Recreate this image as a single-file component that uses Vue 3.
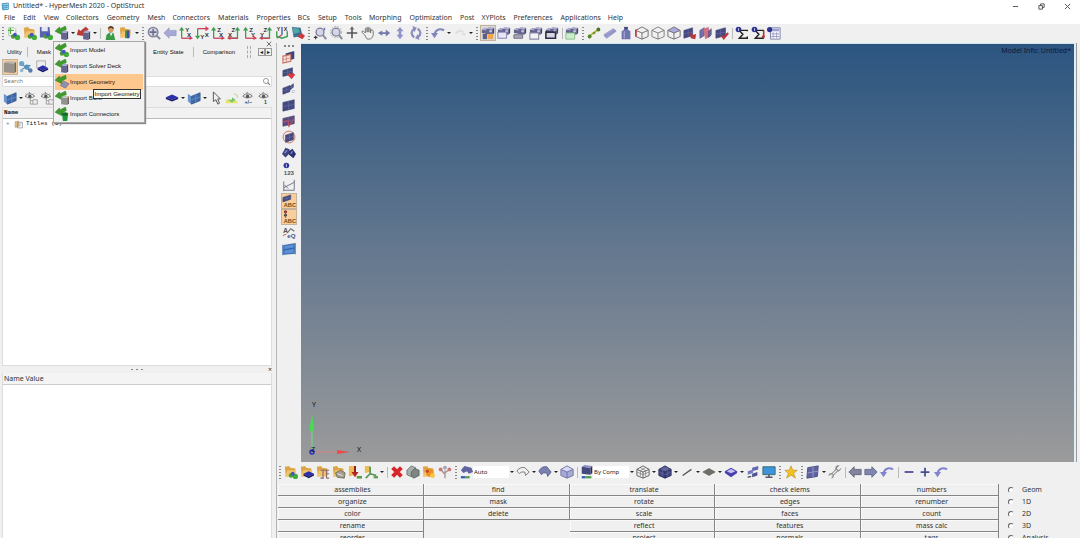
<script setup>
import { ref } from 'vue'

const menus = ['File', 'Edit', 'View', 'Collectors', 'Geometry', 'Mesh', 'Connectors', 'Materials', 'Properties', 'BCs', 'Setup', 'Tools', 'Morphing', 'Optimization', 'Post', 'XYPlots', 'Preferences', 'Applications', 'Help']

/* ---- icon building blocks, all on a 16 x 16 grid ---- */
const poly = (pts, fill, extra = '') => `<polygon points="${pts}" fill="${fill}" ${extra}/>`
const line = (d, color, w = 1) => `<path d="${d}" fill="none" stroke="${color}" stroke-width="${w}"/>`
const box = (x, y, w, h, front, top, side) =>
  poly(`${x},${y + 2} ${x + w - 2},${y + 3} ${x + w - 2},${y + h} ${x},${y + h - 1}`, front) +
  poly(`${x},${y + 2} ${x + 3},${y} ${x + w},${y + 1} ${x + w - 2},${y + 3}`, top) +
  poly(`${x + w - 2},${y + 3} ${x + w},${y + 1} ${x + w},${y + h - 2} ${x + w - 2},${y + h}`, side)
const brick = (x, y, w = 8, h = 7) => box(x, y, w, h, '#64648f', '#a9a9cf', '#41416e')
const plate = (x, y, w, h, c = '#454981') =>
  poly(`${x},${y + 3} ${x + w},${y} ${x + w},${y + h - 3} ${x},${y + h}`, c, 'stroke="#35396c" stroke-width=".6"') +
  line(`M${x + w / 2} ${y + 2}V${y + h - 2}M${x} ${y + h / 2 + 1}L${x + w} ${y + h / 2 - 1}`, '#7075ab', 0.6)
const diamond = (x, y, w = 9, c = '#2b2fae') =>
  poly(`${x},${y + 3} ${x + w / 2},${y} ${x + w},${y + 3} ${x + w / 2},${y + 6}`, c) +
  poly(`${x},${y + 3} ${x + w / 2},${y + 6} ${x + w},${y + 3} ${x + w},${y + 5} ${x + w / 2},${y + 8} ${x},${y + 5}`, '#15186c')
const balls = (x, y) =>
  `<circle cx="${x}" cy="${y}" r="2.6" fill="#4a9a35"/><circle cx="${x + 5}" cy="${y + 1}" r="3" fill="#3fae36"/><circle cx="${x + 2}" cy="${y - 2}" r="2.2" fill="#4753c4"/>`
const folder = poly('1,2 6,1 7,3 13,4 13,12 2,13', '#dda545') + poly('1,13 4,6 14,6 11,13', '#f1c36c')
const greenArrow = poly('0,6 5,1 6,3 12,0 13,4 8,7 8,10', '#3f9a2e', 'stroke="#277a1a" stroke-width=".5"')
const redArrow = poly('0,10 2,4 4,6 10,1 13,4 7,8 8,11', '#c03a33', 'stroke="#8f1e1a" stroke-width=".5"')
const label = (x, y, t, size = 6, c = '#333') => `<text x="${x}" y="${y}" font-size="${size}" font-family="Liberation Sans, sans-serif" font-weight="bold" fill="${c}">${t}</text>`
const axes = (up, side, flip) => flip
  ? line('M12 2V14H2', '#3d9e4c', 1.5) + line('M12 14H2', '#d0405c', 1.5) + poly('9,5 12,1 15,5', '#3d9e4c') + poly('4,11 0,14 4,16', '#d0405c') + label(5, 7, up, 7) + label(1, 12, side, 7)
  : line('M3 2V14', '#3d9e4c', 1.5) + line('M3 14H13', '#d0405c', 1.5) + poly('0,5 3,1 6,5', '#3d9e4c') + poly('12,11 16,14 12,16', '#d0405c') + label(7, 7, up, 7) + label(9, 12, side, 7)
const lens = (x, y, r) => `<circle cx="${x}" cy="${y}" r="${r}" fill="#d4d7ea" stroke="#7c7f96" stroke-width="1.5"/>` + line(`M${x + r * 0.7} ${y + r * 0.7}L15 15`, '#8a8ca0', 2.4)
const wire = (c, top = 'none') =>
  poly('1,5 8,1 15,5 8,8', top) + line('M1 5L8 1L15 5V12L8 15L1 12ZM1 5L8 8L15 5M8 8V15', c, 1)
const undo = (c) => line('M4 9C6 3 11 3 15 5', c, 2.4) + poly('0,8 8,8 4,14', c)
const disp = (lower) => brick(1, 2, 8, 7) + brick(6, 1, 9, 9) + '<circle cx="11" cy="6" r="1.500" fill="#c5c5e0"/>' + lower
const eye = (x, y) => line(`M${x} ${y}q5.500 -6 11 0q-5.500 4 -11 0ZM${x + 1} ${y - 3}l1 1M${x + 5} ${y - 5}v1.500M${x + 10} ${y - 3}l-1 1`, '#6b6b6b', 1) + `<circle cx="${x + 5.5}" cy="${y}" r="1.900" fill="#555"/>`
const sigma = line('M14 6V5H5L9 9.500L5 14H14V12', '#222', 1.7) + '<circle cx="4" cy="4" r="3.200" fill="#2d348f"/>' + line('M4 2.500V5.500', '#fff', 0.8)

const icons = {
  app: poly('1,2 14,1 14,14 2,14', '#d6ecf7') + line('M2 3L13 2V13L3 14ZM2 7L13 6M5 3V14M9 2V13M3 11L13 9', '#2587b8', 1.3),
  newModel: poly('2,2 8,2 10,4 10,11 2,11', '#fff', 'stroke="#8bb384" stroke-width=".8"') + line('M4 2V9M1 5H8', '#55b044', 1.5) + balls(7, 12),
  open: folder + balls(8, 12),
  save: poly('1,1 12,1 13,13 1,13', '#5a63ac') + poly('3,1 10,1 10,6 3,6', '#e4e7f5') + balls(8, 12),
  import: greenArrow + brick(7, 5, 8, 11),
  export: redArrow + brick(7, 5, 8, 11),
  user: '<circle cx="9" cy="4" r="3.200" fill="#d89a63"/>' + line('M6 3Q9 -1 12 3', '#54371f', 1.8) + poly('3,16 4,10 8,7 12,8 14,16', '#3c9a45') + poly('8,8 11,8 9,12', '#eef'),
  folderPlay: folder + poly('7,5 9,5 9,14 7,14', '#2f8a4b') + poly('9,5 12,5 12,14 9,14', '#344fae'),
  fit: lens(7, 7, 5.5) + line('M7 3V11M3 7H11', '#6d7088', 1.8),
  prev: poly('1,8 7,2 7,5 15,5 15,11 7,11 7,14', '#a6a9d6', 'stroke="#9093c0" stroke-width=".7"'),
  xyTop: axes('Y', 'X'),
  xyBottom: line('M3 14V3', '#3d9e4c', 1.5) + line('M3 3H13', '#d0405c', 1.5) + poly('0,11 3,15 6,11', '#3d9e4c') + poly('12,0 16,3 12,6', '#d0405c') + label(6, 15, 'Y', 7) + label(11, 12, 'X', 7),
  xzLeft: axes('Z', 'X'),
  xzRight: axes('Z', 'X', true),
  yzLeft: axes('Z', 'Y'),
  yzRight: axes('Z', 'Y', true),
  iso: line('M8 1V10', '#3a51b5', 1.5) + line('M8 10L2 14', '#d0405c', 1.5) + line('M2 6V12L8 14L14 12V6', '#3d9e4c', 1.6) + label(2, 6, 'Y', 6) + label(10, 6, 'X', 6),
  saved: poly('1,1 11,2 13,11 3,13', '#3d7093') + poly('2,2 9,3 10,7 3,9', '#50a7a3') + poly('7,12 12,8 16,11 13,15', '#c73d3d'),
  zoomWin: lens(8, 7, 4.5) + line('M1 13H5M3 11V15', '#333', 1.2) + line('M13 2V5', '#7579b5', 1.8),
  zoomCircle: lens(8, 7, 4.5) + '<circle cx="8" cy="7" r="6.500" fill="none" stroke="#999" stroke-width=".8" stroke-dasharray="2 1.500"/>',
  pan: line('M8 2V14M2 8H14', '#555', 1.8) + line('M6 4L8 1L10 4', '#555', 1),
  hand: line('M4 10L1 7Q1 5 3 6L5 8V3Q6 1 7 3V7V2Q8 0 9 2V7V3Q10 1 11 3V8V5Q13 3 14 6V10Q13 15 9 15H7Z', '#777', 1.1),
  leftRight: poly('1,8 6,5 6,7 10,7 10,4 15,8 10,12 10,9 6,9 6,11', '#7478aa'),
  upDown: poly('8,1 12,6 9.500,6 9.500,10 12,10 8,15 4,10 6.500,10 6.500,6 4,6', '#9093c9'),
  rotate: line('M6 3Q0 8 6 13M10 3Q16 8 10 13', '#8a8dbd', 2.6) + poly('4,0 9,2 6,7', '#8a8dbd') + poly('12,16 7,14 10,9', '#8a8dbd'),
  undo: undo('#8186bd'),
  undoBlue: undo('#8084d0'),
  redo: line('M3 9Q7 3 12 7', '#dcdce4', 2) + poly('9,8 15,8 13,12', '#dfdfe7'),
  disp1: disp(poly('2,9 7,9 7,15 2,15', '#5d5d88') + poly('8,9 14,9 14,15 8,15', '#f2a64a')),
  disp2: disp(poly('1,7 11,7 11,14 1,14', '#e6e6f6', 'stroke="#7777a5" stroke-width="1"')),
  disp3: disp(poly('1,10 11,10 11,14 1,14', '#a7a7b8', 'stroke="#66667d" stroke-width="1"')),
  disp4: disp(poly('1,8 11,8 11,15 1,15', '#f4f4f4', 'stroke="#8a8aa8" stroke-width="1.200"')),
  disp5: disp(poly('1,7 12,7 12,14 1,14', '#d5d5e2', 'stroke="#2d2d49" stroke-width="1.800"')),
  disp6: disp(poly('1,8 11,8 11,15 1,15', '#cdebcd', 'stroke="#8cba8c" stroke-width="1"')),
  lineGreen: line('M2 12L13 4', '#b3b83a', 2) + '<circle cx="3" cy="12" r="2.200" fill="#4e8628"/><circle cx="8" cy="8" r="1.500" fill="#6e962f"/><circle cx="13" cy="4" r="2.200" fill="#44762b"/>',
  beam: poly('1,10 12,3 15,6 4,14', '#a1a1d5', 'stroke="#8787bd" stroke-width=".8"') + line('M2 12L14 5', '#8383bb', 1),
  bottle: poly('6,1 10,1 10,4 13,6 13,15 3,15 3,6 6,4', '#7074ae') + poly('6,1 10,1 10,4 6,4', '#484b84') + line('M6 6V14', '#a2a5d3', 1.5),
  cubeRed: wire('#666') + line('M1 4V12', '#c33', 1.8),
  cube: wire('#777'),
  cubeTop: wire('#666', '#a9abdf'),
  plateRed: plate(1, 2, 10, 12) + poly('8,8 12,10 15,9 14,15 9,14', '#b9343d'),
  plateMid: plate(1, 2, 5, 12, '#7b6fae') + poly('5,3 11,1 13,12 7,15', '#cf7384') + plate(11, 3, 3, 10, '#6d5c94'),
  plateCheck: plate(1, 2, 11, 12) + line('M8 11L10 14L15 8', '#b9343d', 2.4),
  sigma,
  sigmaDown: sigma + line('M14.500 5V13', '#b93030', 1.8) + poly('12,11 16,11 14.500,15', '#b93030'),
  calc: poly('4,2 15,2 15,15 4,15', '#f5f5fb', 'stroke="#7b7ea4" stroke-width="1"') + poly('5,3 14,3 14,6 5,6', '#9da1d0') + line('M7 7V14M11 7V14M5 9H14M5 12H14', '#9a9dc4', 1) + '<circle cx="3" cy="4" r="3" fill="#2d348f"/>',
  /* vertical toolbar */
  sketch: poly('4,4 14,1 14,10 5,13', '#3e4378') + poly('1,7 10,5 10,13 1,15', '#f3dedb', 'stroke="#c7705f" stroke-width="1.200"') + line('M1 11L10 9M5 6V14', '#c98273', 0.8),
  mask: plate(1, 2, 11, 10, '#3e4d78') + poly('6,10 9,8 11,9 13,8 15,10 11,15', '#d83a45'),
  shells: plate(1, 4, 8, 10) + plate(9, 2, 4, 7) + line('M11 10H15M11 12H14', '#b8bfd8', 1),
  shell: plate(1, 2, 13, 13),
  shellRed: plate(1, 2, 13, 12, '#60497c') + line('M1 9L7 8L8 14L14 5', '#b2505f', 1.3),
  shellRound: '<circle cx="8" cy="8" r="6.800" fill="#f5e3df" stroke="#b87468" stroke-width="1"/>' + plate(4, 3, 9, 11),
  binocular: poly('0,9 4,2 9,4 8,9 4,13', '#3c4380') + poly('8,6 12,3 16,9 13,14 8,10', '#2c3270') + line('M3 8L6 5M10 9L12 6', '#8b93c9', 1.4),
  numbers: '<circle cx="5" cy="4" r="3.200" fill="#2b319b"/>' + line('M5 2V6', '#dde', 1) + label(2, 15, '123', 7, '#555'),
  measure: line('M2 4V15M14 2V14M2 11L14 5M2 14H14M3 8L7 12', '#666a7d', 1),
  abcPlate: plate(1, 1, 9, 8) + label(2, 15, 'ABC', 6.5, '#6d4a16'),
  abcDots: '<circle cx="4" cy="2" r="1.800" fill="#833"/><circle cx="4" cy="6" r="1.600" fill="#333"/>' + line('M4 2V9', '#c33', 1) + label(2, 15, 'ABC', 6.5, '#6d4a16'),
  abcFree: label(1, 8, 'A', 8, '#555') + line('M6 8L10 3L14 6', '#666', 1.2) + label(6, 14, 'eQ', 7, '#4e527d') + line('M1 11L5 9', '#b44', 1),
  image: poly('2,4 14,2 14,13 2,14', '#5a8fd6', 'stroke="#2d5ea0" stroke-width="1"') + line('M1 3V15M15 1V14M2 9L14 7', '#2f63ab', 1.2),
  /* model browser */
  block: box(1, 1, 14, 14, '#97938c', '#b9b6b0', '#6b6862'),
  nodes: line('M3 5L8 8L13 6M8 8L12 12M8 8L3 11', '#4b7fa8', 1.3) + '<circle cx="3" cy="4" r="3" fill="#69a7cd"/><circle cx="9" cy="8" r="3" fill="#5894be"/><circle cx="13" cy="12" r="2.500" fill="#5a7bad"/><circle cx="3" cy="12" r="2" fill="#94b6cb"/>',
  component: poly('2,1 12,1 12,9 2,9', '#eee', 'stroke="#a4a4a4" stroke-width="1"') + diamond(3, 6, 12),
  plateBlue: poly('1,3 5,6 5,15 1,12', '#6c94cd') + poly('5,6 15,2 15,11 5,15', '#4169a9', 'stroke="#2e5288" stroke-width=".8"') + line('M10 4V13M5 10L15 7', '#6b93c8', 0.8),
  eyeTree: eye(0, 6) + line('M6 8V15H9M6 11H9', '#999', 1) + line('M9 10H14V15H9Z', '#999', 1),
  plainDiamond: diamond(1, 4, 14),
  pointer: line('M5 1V12L8 10L10 15L12 14L10 9H13Z', '#555', 1.1),
  highlight: poly('1,10 12,10 15,14 1,14', '#e6e468') + poly('3,10 8,10 8,7 12,10 8,13', '#79c471') + line('M10 3L14 5V8', '#c3c97e', 1),
  eyePm: eye(2, 6) + label(4, 15, '+/−', 6, '#444'),
  eyeOne: eye(2, 6) + label(8, 15, '1', 6, '#444'),
  search: '<circle cx="7" cy="7" r="4.500" fill="none" stroke="#777" stroke-width="1.300"/>' + line('M10 10L14 14', '#777', 1.8),
  titles: poly('1,3 7,2 7,12 1,13', '#eac78d', 'stroke="#a07b4c" stroke-width=".8"') + line('M5 4H14V14H5Z', '#777', 1.1) + line('M7 7H12M7 10H11', '#777', 1),
  /* import menu */
  impModel: greenArrow + balls(8, 12),
  impDeck: greenArrow + brick(7, 5, 8, 11),
  impGeom: greenArrow + poly('6,12 10,7 16,10 12,15', '#8d91ae', 'stroke="#656a90" stroke-width=".7"'),
  impBom: greenArrow + box(7, 5, 9, 11, '#92928f', '#c2c2bf', '#686865'),
  impConn: greenArrow + poly('8,8 15,8 14,16 9,16', '#20963a') + '<ellipse cx="11.500" cy="8" rx="3.600" ry="2" fill="#116d27"/>',
  /* bottom toolbar */
  fBalls: folder + balls(8, 12),
  fDiamond: folder + diamond(4, 7, 12),
  fMat: folder + line('M5 6H15M8 6V15M12 6V15M5 15H9M12 10H15M12 15H15', '#8a6b67', 1.3),
  fProp: folder + poly('4,9 10,6 15,9 14,15 6,14', '#a19f91', 'stroke="#6d6a5c" stroke-width="1"') + line('M6 10L12 12', '#eee', 1),
  fLoad: poly('1,1 8,1 8,11 1,13', '#efbb57') + line('M8 1V12', '#8b1919', 2.2) + poly('4,8 12,8 8,14', '#b72323') + line('M10 14H16', '#5a9a4b', 3),
  fSystem: poly('1,1 7,1 7,8 1,9', '#efbb57') + line('M7 2V10L2 15M7 10L14 12', '#4f9250', 1.8) + line('M11 14H16', '#5a9a4b', 2.5),
  delete: line('M3 3L13 13M13 3L3 13', '#d6262b', 4.6),
  stack: poly('1,6 6,1 11,3 11,10 5,13 1,11', '#a6aea9', 'stroke="#59615c" stroke-width=".8"') + poly('6,8 10,4 15,6 15,12 9,15 6,13', '#7e8682', 'stroke="#4f5753" stroke-width=".8"'),
  organize: folder + '<circle cx="9" cy="9" r="4.300" fill="#f08d25"/><circle cx="12" cy="12" r="2.800" fill="#f6c545"/><circle cx="6" cy="7" r="1.800" fill="#c3452a"/>',
  numberTree: line('M8 15V6M8 11L4 6M8 9L12 6', '#a88c8c', 1.4) + '<circle cx="3" cy="5" r="2.200" fill="#c77878"/><circle cx="8" cy="3" r="2.200" fill="#a5a5b5"/><circle cx="13" cy="5" r="2.200" fill="#c77878"/>',
  autoColor: poly('1,6 5,1 13,3 15,8 10,10 8,7 4,9', '#5f649f') + line('M1 14H6', '#2f59b5', 2.5) + line('M6 14H11', '#4b9b49', 2.5),
  surfWire: line('M1 7Q4 2 10 3L15 8L11 12L10 8Q5 7 4 10Z', '#777', 1.1),
  surfSolid: '<path d="M1 7Q4 1 10 2L15 8L11 13L10 9Q5 8 4 11Z" fill="#7c80b0" stroke="#555a8f"/>',
  cubeGlass: poly('1,5 8,1 15,5 15,12 8,15 1,12', '#a8aad6') + wire('#6c6fa0', '#d8d9f5'),
  compColor: box(2, 0, 12, 11, '#444980', '#8d91c2', '#292d5e') + line('M2 14H6', '#2f59b5', 2.500) + line('M6 14H13', '#4b9b49', 2.500),
  meshWire: wire('#555') + line('M5 3L11 6.500V13M11 3L5 6.500V13M1 8L8 11L15 8', '#777', 0.8),
  meshSolid: poly('1,5 8,1 15,5 15,12 8,15 1,12', '#40457f') + wire('#282b5a', '#5c6199') + line('M5 3L11 6.500V13M11 3L5 6.500V13M1 8L8 11L15 8', '#6d72a3', 0.6),
  elem1d: line('M3 12L13 5', '#555', 1.5),
  elem2d: poly('1,8 8,4 15,8 8,12', '#6d7169', 'stroke="#4a4d47" stroke-width=".6"'),
  elem3d: poly('1,7 8,3 15,7 15,9 8,14 1,9', '#4b3fae') + poly('3,7 8,4.500 13,7 8,9.500', '#c5c2f4'),
  layers: poly('7,3 14,1 14,5 7,7', '#6268b0') + poly('2,7 8,5 8,9 2,11', '#767cc0') + poly('7,10 13,8 13,12 7,14', '#4c528e') + line('M2 14L6 13', '#555', 1.6),
  monitor: poly('1,2 15,2 15,11 1,11', '#3d93dc', 'stroke="#366" stroke-width="1"') + line('M8 11V14M4 14H12', '#556', 1.8),
  star: poly('8,1 10,6 15,6 11,9.500 13,15 8,11.500 3,15 5,9.500 1,6 6,6', '#f4c21f', 'stroke="#b98812" stroke-width=".7"'),
  panels: poly('2,3 14,1 13,13 1,15', '#5d62a0', 'stroke="#474b82" stroke-width="1"') + line('M8 2V14M2 9L14 7', '#9ca0cc', 1),
  wrench: line('M4 12L11 5', '#8a8a8a', 3.6) + line('M4 12L11 5', '#f0f0f0', 1.6) + line('M15 4L12 7L9 4L12 1Q8 1 9 6M1 12Q2 9 5 10Q8 13 4 15', '#8a8a8a', 1.2),
  back: poly('1,8 7,2 7,5 15,5 15,11 7,11 7,14', '#82849c', 'stroke="#606378" stroke-width="1"'),
  forward: poly('15,8 9,2 9,5 1,5 1,11 9,11 9,14', '#8285b0', 'stroke="#606388" stroke-width="1"'),
  minus: line('M3 8H13', '#484c92', 2),
  plus: line('M3 8H13M8 3V13', '#484c92', 2)
}

const mainTools = ['|:', 'newModel', 'open', 'save', 'import', 'v', 'export', 'v', '|', 'user', 'folderPlay', 'v', '|:',
  'fit', 'prev', 'xyTop', 'xyBottom', 'xzLeft', 'xzRight', 'yzLeft', 'yzRight', 'iso', 'saved', '|:',
  'zoomWin', 'zoomCircle', 'pan', 'hand', 'leftRight', 'upDown', 'rotate', '|:', 'undo', 'v', 'redo', 'v', '|:',
  'disp1', 'disp2', 'disp3', 'disp4', 'disp5', '|', 'disp6', '|:',
  'lineGreen', 'beam', 'bottle', 'cubeRed', 'cube', 'cubeTop', 'plateRed', 'plateMid', 'plateCheck', '|', 'sigma', 'sigmaDown', 'calc']

const lowerTools = ['|:', 'fBalls', 'fDiamond', 'fMat', 'fProp', 'fLoad', 'fSystem', 'v', '|', 'delete', 'stack', 'organize', 'numberTree', '|:',
  { icon: 'autoColor', value: 'Auto', name: 'Geometry color mode' }, 'v', 'surfWire', 'v', 'surfSolid', 'v', 'cubeGlass', '|',
  { icon: 'compColor', value: 'By Comp', name: 'Element color mode' }, 'v', 'meshWire', 'v', 'meshSolid', 'v', 'elem1d', 'v', 'elem2d', 'v', 'elem3d', 'v', 'layers', 'monitor', '|:',
  'star', '|:', 'panels', 'v', 'wrench', '|', 'back', 'forward', 'undoBlue', '||', 'minus', 'plus', 'undoBlue']

const sideTools = ['sketch', 'mask', 'shells', 'shell', 'shellRed', 'shellRound', 'binocular', 'numbers', 'measure', 'abcPlate', 'abcDots', 'abcFree', 'image']
const pressed = ['disp1', 'abcPlate', 'abcDots', 'block']

const importMenu = [
  ['impModel', 'Import Model'], ['impDeck', 'Import Solver Deck'], ['impGeom', 'Import Geometry'], ['impBom', 'Import BOM'], ['impConn', 'Import Connectors']
]

const panel = [
  ['assemblies', 'organize', 'color', 'rename', 'reorder'],
  ['find', 'mask', 'delete'],
  ['translate', 'rotate', 'scale', 'reflect', 'project'],
  ['check elems', 'edges', 'faces', 'features', 'normals'],
  ['numbers', 'renumber', 'count', 'mass calc', 'tags']
]
const pages = ['Geom', '1D', '2D', '3D', 'Analysis']
const page = ref('')
const query = ref('')
</script>

<template>
  <div class="window">
    <header class="titlebar">
      <svg class="logo" viewBox="0 0 16 16" v-html="icons.app"></svg>
      <span class="title">Untitled* - HyperMesh 2020 - OptiStruct</span>
      <button class="sys" aria-label="Minimize"><svg viewBox="0 0 8 8"><path d="M1 4H7" /></svg></button>
      <button class="sys" aria-label="Restore"><svg viewBox="0 0 8 8"><path d="M1 3H5V7H1ZM3 3V1H7V5H5" /></svg></button>
      <button class="sys" aria-label="Close"><svg viewBox="0 0 8 8"><path d="M1 1L7 7M7 1L1 7" /></svg></button>
    </header>
    <nav class="menubar">
      <button v-for="m in menus" :key="m">{{ m }}</button>
    </nav>
    <div class="toolbar main-tools">
      <template v-for="(t, i) in mainTools" :key="i">
        <span v-if="t === '|:'" class="grip"></span>
        <span v-else-if="t === '|'" class="sep"></span>
        <button v-else-if="t === 'v'" class="caret" aria-label="More"></button>
        <button v-else class="tool" :class="{ pressed: pressed.includes(t) }" :aria-label="t"><svg viewBox="0 0 16 16" v-html="icons[t]"></svg></button>
      </template>
    </div>

    <div class="body">
      <aside class="browser">
        <div class="tabs">
          <button class="tab">Utility</button>
          <button class="tab">Mask</button>
          <span class="tab-gap"></span>
          <button class="tab">Entity State</button>
          <button class="tab">Comparison</button>
          <span class="torn"></span>
          <span class="tab-nav"><button aria-label="Previous tabs">◂</button><button aria-label="Next tabs">▸</button></span>
          <button class="close" aria-label="Close panel"><svg viewBox="0 0 8 8"><path d="M1 1L7 7M7 1L1 7" /></svg></button>
        </div>
        <div class="toolbar views">
          <button v-for="t in ['block', 'nodes', 'component']" :key="t" class="tool" :class="{ pressed: t === 'block' }" :aria-label="t"><svg viewBox="0 0 16 16" v-html="icons[t]"></svg></button>
        </div>
        <label class="search">
          <input v-model="query" type="text" placeholder="Search" aria-label="Search" />
          <svg viewBox="0 0 16 16" v-html="icons.search"></svg>
        </label>
        <div class="toolbar actions">
          <button class="tool" aria-label="Show elements"><svg viewBox="0 0 16 16" v-html="icons.plateBlue"></svg></button>
          <button class="caret" aria-label="More"></button>
          <button class="tool" aria-label="Show all"><svg viewBox="0 0 16 16" v-html="icons.eyeTree"></svg></button>
          <button class="tool" aria-label="Hide all"><svg viewBox="0 0 16 16" v-html="icons.eyeTree"></svg></button>
          <span class="stretch"></span>
          <button class="tool" aria-label="Components"><svg viewBox="0 0 16 16" v-html="icons.plainDiamond"></svg></button>
          <button class="caret" aria-label="More"></button>
          <button class="tool" aria-label="Elements"><svg viewBox="0 0 16 16" v-html="icons.plateBlue"></svg></button>
          <button class="caret" aria-label="More"></button>
          <button v-for="t in ['pointer', 'highlight', 'eyePm', 'eyeOne']" :key="t" class="tool" :aria-label="t"><svg viewBox="0 0 16 16" v-html="icons[t]"></svg></button>
        </div>
        <div class="tree">
          <div class="tree-head">Name</div>
          <div class="tree-row"><span class="expander">+</span><svg viewBox="0 0 16 16" v-html="icons.titles"></svg>Titles (1)</div>
        </div>
        <div class="hsplit"><i></i><i></i><i></i><span>×</span></div>
        <div class="props">
          <div class="props-head">Name Value</div>
        </div>
      </aside>

      <main class="work">
        <div class="stage">
          <div class="side-tools">
            <span class="hgrip"></span>
            <button v-for="t in sideTools" :key="t" class="tool" :class="{ pressed: pressed.includes(t) }" :aria-label="t"><svg viewBox="0 0 16 16" v-html="icons[t]"></svg></button>
          </div>
          <div class="viewport">
            <div class="model-info">Model Info: Untitled*</div>
            <svg class="triad" viewBox="0 0 60 60">
              <path d="M9 50V26" stroke="#6fe07a" stroke-width="1" />
              <polygon points="7,26 9,13 11,26 11,30 7,30" fill="#3fe04c" />
              <path d="M12 51H34" stroke="#d88484" stroke-width="1" />
              <polygon points="34,49 47,51 34,53" fill="#ee4a4c" />
              <circle cx="9" cy="51" r="2" fill="none" stroke="#2532b8" stroke-width="1.500" />
              <text x="9" y="6">Y</text><text x="8" y="51">Z</text><text x="54" y="51">X</text>
            </svg>
          </div>
        </div>
        <div class="toolbar lower-tools">
          <template v-for="(t, i) in lowerTools" :key="i">
            <span v-if="t === '|:'" class="grip"></span>
            <span v-else-if="t === '|'" class="sep"></span>
            <span v-else-if="t === '||'" class="sep wide"></span>
            <button v-else-if="t === 'v'" class="caret" aria-label="More"></button>
            <label v-else-if="t.icon" class="combo">
              <svg viewBox="0 0 16 16" v-html="icons[t.icon]"></svg>
              <select :aria-label="t.name"><option>{{ t.value }}</option></select>
            </label>
            <button v-else class="tool" :aria-label="t"><svg viewBox="0 0 16 16" v-html="icons[t]"></svg></button>
          </template>
        </div>
        <div class="panel">
          <div v-for="(col, i) in panel" :key="i" class="column">
            <button v-for="c in col" :key="c">{{ c }}</button>
          </div>
          <fieldset class="pages" aria-label="Pages">
            <label v-for="p in pages" :key="p"><input v-model="page" type="radio" name="page" :value="p" />{{ p }}</label>
          </fieldset>
        </div>
      </main>
    </div>

    <div class="popup" role="menu">
      <button v-for="[icon, text] in importMenu" :key="icon" role="menuitem" :class="{ hot: icon === 'impGeom' }">
        <svg viewBox="0 0 16 16" v-html="icons[icon]"></svg>{{ text }}
      </button>
      <div class="tooltip" role="tooltip">Import Geometry</div>
    </div>
  </div>
</template>

<style>
html, body, #app { height: 100%; }
body { overflow: hidden; }
</style>

<style scoped>
* { box-sizing: border-box; }
.window {
  position: relative; display: flex; flex-direction: column; height: 100%; background: #f0f0f0;
  color: #333; font: 7px/12px "Noto Sans", "Open Sans", sans-serif;
}
button { margin: 0; padding: 0; border: 0; background: none; color: inherit; font: inherit; white-space: nowrap; }
svg { display: block; flex: none; }

.titlebar { display: flex; align-items: center; height: 12px; background: #fff; }
.logo { width: 9px; height: 9px; margin: 0 3px 0 1px; }
.title { flex: 1; }
.sys { display: grid; place-items: center; width: 26px; height: 12px; }
.sys svg { width: 7px; height: 7px; }
.sys path, .close path { fill: none; stroke: #444; stroke-width: 1; }

.menubar { display: flex; height: 12px; padding-left: 4px; background: #fff; }
.menubar button { padding-right: 8px; }
.menubar button:nth-child(3n) { padding-right: 7px; }

.toolbar { display: flex; align-items: center; flex: none; }
.main-tools { height: 19px; padding-bottom: 1px; }
.tool { display: grid; place-items: center; flex: none; width: 16px; height: 16px; }
.tool svg { width: 14px; height: 14px; }
.pressed { background: #f8cf9c; outline: 1px solid #c3b29c; outline-offset: -1px; }
.main-tools .pressed { background: #d9d9d9; }
.grip { flex: none; width: 6px; height: 13px; background: radial-gradient(circle, #888 1px, transparent 1px) center / 6px 3px; }
.sep { flex: none; width: 4px; height: 11px; background: linear-gradient(#bbb, #bbb) center / 1px 100% no-repeat; }
.wide { width: 6px; }
.caret { display: grid; place-items: center; flex: none; width: 6px; height: 16px; }
.caret::before { content: ""; border: 2px solid transparent; border-top-color: #222; border-bottom: 0; }

.body { display: flex; flex: 1; min-height: 0; }
.browser { display: flex; flex-direction: column; flex: none; width: 277px; padding: 0 4px 0 2px; border-right: 1px solid #b5b5b5; }
.tabs { position: relative; display: flex; align-items: center; height: 15px; padding-top: 3px; font: 6px/10px "Liberation Sans", sans-serif; color: #111; }
.tab { padding: 0 5px; height: 10px; }
.tab + .tab { padding-left: 9px; border-left: 1px solid #bbb; }
.tab-gap { flex: none; width: 92px; }
.tab-gap + .tab { padding-right: 9px; }
.torn { width: 4px; height: 12px; margin: 0 auto 0 7px; border: 1px dashed #aaa; border-width: 0 1px; }
.tab-nav { display: flex; }
.tab-nav button { width: 7px; height: 8px; border: 1px solid #999; line-height: 6px; }
.close { position: absolute; top: -2px; right: 0; width: 6px; height: 6px; }
.close svg { width: 6px; height: 6px; }
.views { height: 18px; }
.search { display: flex; align-items: center; height: 11px; margin-bottom: 1px; border: 1px solid #ddd; background: #fff; }
.search input { flex: 1; min-width: 0; height: 9px; padding: 0 1px; border: 0; outline: 0; background: transparent; font: 6px/9px "Noto Sans", sans-serif; color: #333; }
.search input::placeholder { color: #777; }
.search svg { width: 9px; height: 9px; }
.actions { height: 19px; }
.stretch { flex: 1; }
.tree { flex: 1; border: 1px solid #ddd; background: #fff; font: 6px/10px "Liberation Mono", monospace; color: #111; }
.tree-head { padding-left: 1px; background: #f2f2f2; border-bottom: 1px solid #bbb; font-weight: bold; }
.tree-row { display: flex; align-items: center; }
.tree-row svg { width: 10px; height: 9px; margin-right: 2px; }
.expander { width: 11px; padding-left: 3px; color: #777; }
.hsplit { position: relative; display: flex; align-items: center; justify-content: center; gap: 3px; height: 7px; }
.hsplit i { width: 2px; height: 1px; background: #888; }
.hsplit span { position: absolute; right: 0; line-height: 7px; }
.props { height: 165px; border-left: 1px solid #ddd; border-right: 1px solid #ddd; background: #fff; }
.props-head { padding-left: 1px; background: #f4f4f4; border-bottom: 1px solid #ccc; line-height: 11px; }

.work { display: flex; flex-direction: column; flex: 1; min-width: 0; }
.stage { display: flex; flex: 1; min-height: 0; }
.side-tools { display: flex; flex-direction: column; align-items: center; flex: none; width: 24px; }
.hgrip { width: 12px; height: 6px; background: radial-gradient(circle, #888 1px, transparent 1px) center / 4px 6px; }
.viewport {
  position: relative; flex: 1; margin-right: 4px; border-top: 1px solid #cfe6ef; border-right: 2px solid #dff0f6;
  background: linear-gradient(#2b5580, #65788f 50%, #9b9b9b);
  box-shadow: 1px 0 #999;
}
.model-info { padding: 1px 3px; text-align: right; color: #0d1638; }
.triad { position: absolute; left: 2px; bottom: 1px; width: 60px; height: 60px; }
.triad text { font: 7px "Noto Sans", sans-serif; fill: #111; }
.lower-tools { height: 20px; }
.combo { display: flex; align-items: center; }
.combo svg { width: 14px; height: 14px; margin: 0 -1px 0 1px; }
.combo select { width: 36px; height: 12px; padding: 0 1px; border: 0; appearance: none; background: #fff; color: #222; font: 6px/12px "Noto Sans", sans-serif; }

.panel { display: grid; grid-template-columns: repeat(4, 146fr) 138fr 81fr; height: 56px; padding: 2px 0 0 1px; overflow: hidden; }
.column { display: flex; flex-direction: column; }
.column button { flex: none; height: 12px; padding-left: 4px; border: 1px solid #858585; border-width: 0 1px 1px 0; line-height: 11px; box-shadow: inset 1px 1px #fafafa; }
.pages { display: flex; flex-direction: column; min-width: 0; margin: 0; padding: 0 0 0 9px; border: 0; }
.pages label { display: flex; align-items: center; flex: none; gap: 8px; height: 12px; }
.pages input { appearance: none; width: 6px; height: 6px; margin: 0; border: 1px solid; border-color: #666 #eee #eee #666; border-radius: 50%; background: #fff; }
.pages input:checked { background: #333; }

.popup { position: absolute; left: 53px; top: 41px; width: 92px; padding: 0 1px; border: 1px solid #a8a8a8; background: #f1f1f1; box-shadow: 1px 1px 1px #888; color: #111; font: 6px/16px "Liberation Sans", sans-serif; }
.popup button { display: flex; align-items: center; width: 100%; height: 16px; gap: 1px; }
.popup button svg { width: 14px; height: 14px; }
.popup .hot { background: #fdc78d; }
.tooltip { position: absolute; left: 39px; top: 47px; width: 48px; height: 10px; border: 1px solid #333; background: #fbfbee; line-height: 8px; text-align: center; white-space: nowrap; }
</style>
